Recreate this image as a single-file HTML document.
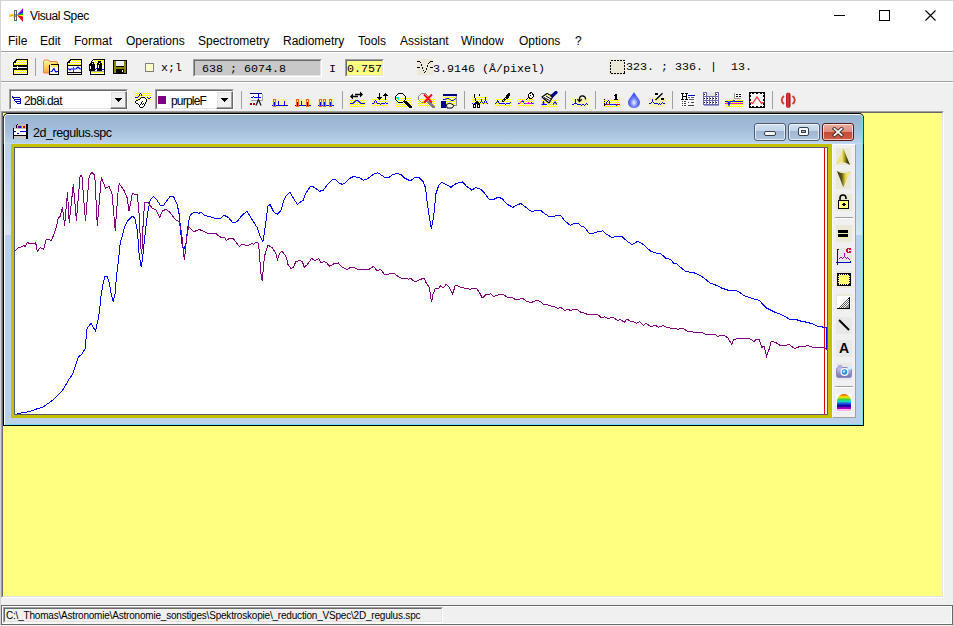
<!DOCTYPE html>
<html><head><meta charset="utf-8">
<style>
*{margin:0;padding:0;box-sizing:border-box}
html,body{width:954px;height:626px;overflow:hidden;background:#f0f0f0;font-family:"Liberation Sans",sans-serif;font-size:12px;color:#000}
.a{position:absolute}
.mono{font-family:"Liberation Mono",monospace}
#win{position:absolute;left:0;top:0;width:954px;height:626px;border:1px solid #d4d4d4;border-bottom:none;background:#f0f0f0}
#title{position:absolute;left:1px;top:1px;width:952px;height:29px;background:#fff}
#menu{position:absolute;left:1px;top:30px;width:952px;height:21px;background:#fff}
.mi{position:absolute;top:4px;font-size:12px;white-space:nowrap}
.hsep{position:absolute;left:1px;width:952px;height:1px;background:#a0a0a0}
.hsepw{position:absolute;left:1px;width:952px;height:1px;background:#fff}
.vsep{position:absolute;width:1px;background:#a0a0a0}
.btn{width:32px;height:18px;border:1px solid #4e5b70;border-radius:3px;background:linear-gradient(#d2e0f0 0%,#c2d4ea 45%,#9fb6d2 46%,#aec4de 100%);box-shadow:inset 0 0 0 1px rgba(255,255,255,0.65)}
.cls{border-color:#5a1818;background:linear-gradient(#eab0a0 0%,#dc8c78 50%,#c44a30 51%,#d06048 100%)}
.g-min{position:absolute;left:9px;top:7px;width:12px;height:5px;background:#fafafa;border:1px solid #3a3e48;border-radius:2px}
.g-max{position:absolute;left:9px;top:3px;width:11px;height:9px;background:#fafafa;border:1px solid #3a3e48;border-radius:2px}
.g-max:after{content:"";position:absolute;left:2px;top:2px;width:3px;height:1px;background:#9ab8d8;border:1px solid #3a3e48}
.combo{position:absolute;height:21px;border-top:1px solid #a0a0a0;border-left:1px solid #a0a0a0;border-right:1px solid #fff;border-bottom:1px solid #fff;background:#fff}
.combo:before{content:"";position:absolute;left:0;top:0;right:0;bottom:0;border-top:1px solid #696969;border-left:1px solid #696969;border-right:1px solid #e3e3e3;border-bottom:1px solid #e3e3e3;pointer-events:none}
.dd{position:absolute;top:1px;width:17px;height:18px;background:#f0f0f0;border-top:1px solid #fff;border-left:1px solid #fff;border-right:1px solid #696969;border-bottom:1px solid #696969;box-shadow:inset -1px -1px 0 #a0a0a0,inset 1px 1px 0 #e3e3e3}
.dd svg{position:absolute;left:4px;top:6px}
.sunk{border-top:1px solid #a0a0a0;border-left:1px solid #a0a0a0;border-right:1px solid #fff;border-bottom:1px solid #fff}
.sunk:before{content:"";position:absolute;left:0;top:0;right:0;bottom:0;border-top:1px solid #696969;border-left:1px solid #696969;border-right:1px solid #e3e3e3;border-bottom:1px solid #e3e3e3}
.ico{position:absolute;width:16px;height:16px}
</style></head><body>
<div id="win"></div>
<div id="title">
  <svg class="a" style="left:8px;top:7px" width="15" height="14" viewBox="0 0 15 14" shape-rendering="crispEdges">
    <rect x="0" y="6" width="5" height="3" fill="#ffe000"/>
    <rect x="1" y="6" width="1" height="1" fill="#fff8a0"/><rect x="3" y="8" width="1" height="1" fill="#fff8a0"/>
    <rect x="2" y="7" width="2" height="1" fill="#f0a000"/>
    <rect x="5" y="2" width="3" height="11" fill="#606060"/>
    <rect x="6" y="3" width="1" height="9" fill="#f0f0f0"/>
    <rect x="6" y="6" width="1" height="3" fill="#00d8e0"/>
    <g shape-rendering="auto">
    <polygon points="8,7 14,0 14,3" fill="#c000e0"/>
    <polygon points="8,7 14,2.5 14,5.5" fill="#1010ff"/>
    <polygon points="8,7 14,5 14,7.5" fill="#00c000"/>
    <polygon points="8,7 14,7 14,9" fill="url(#dith)"/>
    <polygon points="8,7 14,8.5 14,14" fill="#f00000"/>
    </g>
  </svg>
  <div class="a" style="left:29px;top:8px;font-size:12px;letter-spacing:-0.4px">Visual Spec</div>
  <div class="a" style="left:833px;top:14px;width:11px;height:1px;background:#000"></div>
  <div class="a" style="left:878px;top:9px;width:11px;height:11px;border:1px solid #000"></div>
  <svg class="a" style="left:924px;top:9px" width="11" height="11" viewBox="0 0 11 11"><path d="M0.5 0.5L10.5 10.5M10.5 0.5L0.5 10.5" stroke="#000" stroke-width="1.1"/></svg>
</div>
<div id="menu">
  <span class="mi" style="left:7px">File</span>
  <span class="mi" style="left:39px">Edit</span>
  <span class="mi" style="left:73px">Format</span>
  <span class="mi" style="left:125px">Operations</span>
  <span class="mi" style="left:197px">Spectrometry</span>
  <span class="mi" style="left:282px">Radiometry</span>
  <span class="mi" style="left:357px">Tools</span>
  <span class="mi" style="left:399px">Assistant</span>
  <span class="mi" style="left:460px">Window</span>
  <span class="mi" style="left:518px">Options</span>
  <span class="mi" style="left:574px">?</span>
</div>
<div class="hsep" style="top:51px"></div>
<div class="hsepw" style="top:52px"></div>

<svg class="a" style="left:13px;top:59px" width="15" height="16" viewBox="0 0 15 16" shape-rendering="crispEdges">
  <path d="M3 0H15V16H0V3Z" fill="#000"/>
  <path d="M4 1H14V6H1V4H3V2H4Z" fill="url(#dith)"/>
  <rect x="1" y="11" width="13" height="4" fill="url(#dith)"/>
  <rect x="0" y="8" width="14" height="1" fill="#fff"/><rect x="4" y="7" width="1" height="3" fill="#fff"/>
</svg>
<div class="vsep" style="left:35px;top:58px;height:18px"></div>
<svg class="a" style="left:43px;top:59px" width="16" height="16" viewBox="0 0 16 16">
  <defs><linearGradient id="fold" x1="0" y1="0" x2="0.3" y2="1"><stop offset="0" stop-color="#fff4c0"/><stop offset="0.5" stop-color="#f8d860"/><stop offset="1" stop-color="#f0a040"/></linearGradient></defs>
  <path d="M0.5 2.5Q0.5 1 2 1H5L7 2.5H13Q14.5 2.5 14.5 4V14H0.5Z" fill="url(#fold)" stroke="#f08040" stroke-width="1"/>
  <g shape-rendering="crispEdges">
  <rect x="6" y="5" width="10" height="11" fill="#000"/><rect x="6" y="5" width="2" height="1" fill="#f0c060"/>
  <rect x="7" y="6" width="8" height="9" fill="#fffce0"/>
  <rect x="8" y="6" width="7" height="2" fill="#ffe860"/>
  </g>
  <path d="M7.5 12.5H9L10 10.5L11 9.5L12 12L13 13L14 12.5H15" fill="none" stroke="#0000ff" stroke-width="1.2"/>
</svg>
<svg class="a" style="left:67px;top:59px" width="15" height="16" viewBox="0 0 15 16" shape-rendering="crispEdges">
  <path d="M3 0H15V16H0V3Z" fill="#000"/>
  <path d="M4 1H14V6H1V4H3V2H4Z" fill="url(#dith)"/>
  <rect x="1" y="7" width="13" height="6" fill="#fff"/>
  <rect x="1" y="14" width="13" height="1" fill="url(#dith)"/>
  <path d="M1 10H2L3 11L4 10H9L10 9L11 8L12 9L13 10H14" fill="none" stroke="#0000ff" stroke-width="1.2" shape-rendering="auto"/>
  <rect x="6" y="8" width="1" height="5" fill="#ff0000"/>
</svg>
<svg class="a" style="left:89px;top:59px" width="16" height="16" viewBox="0 0 16 16" shape-rendering="crispEdges">
  <rect x="1" y="4" width="15" height="12" fill="#000"/><rect x="4" y="0" width="12" height="4" fill="#000"/><rect x="3" y="1" width="1" height="3" fill="#000"/><rect x="2" y="2" width="1" height="2" fill="#000"/>
  <rect x="4" y="1" width="11" height="14" fill="#fff"/><rect x="2" y="4" width="2" height="11" fill="#fff"/><rect x="3" y="2" width="1" height="2" fill="#fff"/>
  <rect x="5" y="1" width="10" height="5" fill="url(#dith)"/>
  <rect x="2" y="13" width="13" height="1" fill="url(#dith)"/>
  <rect x="2" y="12" width="13" height="1" fill="#a0a0a0"/>
  <rect x="5" y="10" width="2" height="1" fill="#0000ff"/><rect x="7" y="9" width="1" height="1" fill="#0000ff"/><rect x="13" y="10" width="2" height="1" fill="#0000ff"/>
  <rect x="0" y="5" width="6" height="7" fill="#000"/><rect x="2" y="3" width="3" height="2" fill="#000"/>
  <rect x="8" y="4" width="5" height="8" fill="#000"/><rect x="9" y="2" width="3" height="2" fill="#000"/>
  <rect x="1" y="7" width="1" height="3" fill="#fff"/><rect x="3" y="4" width="1" height="1" fill="#fff"/>
  <rect x="9" y="6" width="1" height="3" fill="#fff"/><rect x="10" y="4" width="1" height="1" fill="#fff"/>
</svg>
<svg class="a" style="left:113px;top:60px" width="14" height="14" viewBox="0 0 14 14" shape-rendering="crispEdges">
  <rect x="0" y="0" width="14" height="14" fill="#000"/>
  <rect x="1" y="1" width="12" height="12" fill="#8a8400"/>
  <rect x="3" y="1" width="8" height="6" fill="#000"/>
  <rect x="3" y="1" width="8" height="5" fill="#f0f0f0"/>
  <rect x="3" y="9" width="8" height="4" fill="#000"/>
  <rect x="9" y="10" width="1" height="2" fill="#fff"/>
</svg>
<div class="a" style="left:145px;top:63px;width:9px;height:9px;border:1px solid #808080;background:#ffffc8"></div>
<div class="a mono" style="left:161px;top:61px;font-size:11.67px;line-height:14px">x;l</div>
<div class="a sunk" style="left:193px;top:59px;width:129px;height:18px;background:#c8c8c8"></div>
<div class="a mono" style="left:202px;top:62px;font-size:11.67px;line-height:14px;white-space:pre">638 ; 6074.8</div>
<div class="a mono" style="left:329px;top:62px;font-size:11.67px;line-height:14px">I</div>
<div class="a sunk" style="left:345px;top:59px;width:39px;height:18px;background:#ffff80"></div>
<div class="a mono" style="left:347px;top:62px;font-size:11.67px;line-height:14px">0.757</div>
<svg class="a" style="left:417px;top:59px" width="16" height="16" viewBox="0 0 16 16" shape-rendering="crispEdges"><rect width="16" height="16" fill="#ebe8d8"/><g fill="#000"><rect x="0" y="2" width="1" height="1"/><rect x="1" y="2" width="1" height="1"/><rect x="2" y="2" width="1" height="1"/><rect x="3" y="3" width="1" height="1"/><rect x="4" y="5" width="1" height="1"/><rect x="4" y="6" width="1" height="1"/><rect x="5" y="8" width="1" height="1"/><rect x="5" y="9" width="1" height="1"/><rect x="6" y="11" width="1" height="1"/><rect x="7" y="13" width="1" height="1"/><rect x="8" y="12" width="1" height="1"/><rect x="9" y="10" width="1" height="1"/><rect x="9" y="9" width="1" height="1"/><rect x="10" y="7" width="1" height="1"/><rect x="10" y="6" width="1" height="1"/><rect x="11" y="4" width="1" height="1"/><rect x="12" y="3" width="1" height="1"/><rect x="13" y="2" width="1" height="1"/><rect x="14" y="2" width="1" height="1"/><rect x="15" y="2" width="1" height="1"/><rect x="0" y="8" width="1" height="1"/><rect x="1" y="8" width="1" height="1"/><rect x="2" y="8" width="1" height="1"/><rect x="13" y="8" width="1" height="1"/><rect x="14" y="8" width="1" height="1"/><rect x="15" y="8" width="1" height="1"/></g></svg>
<div class="a mono" style="left:433px;top:62px;font-size:11.67px;line-height:14px;white-space:pre">3.9146 (&#197;/pixel)</div>
<svg class="a" style="left:609px;top:59px" width="16" height="16" viewBox="0 0 16 16" shape-rendering="crispEdges">
  <rect x="0" y="0" width="16" height="16" fill="#ebe8d8"/>
  <rect x="1.5" y="1.5" width="14" height="13" fill="none" stroke="#000" stroke-width="1" stroke-dasharray="2 1"/>
</svg>
<div class="a mono" style="left:626px;top:60px;font-size:11.67px;line-height:14px;white-space:pre">323. ; 336. |  13.</div>

<div class="hsep" style="top:81px"></div>
<div class="hsepw" style="top:82px"></div>

<svg width="0" height="0" style="position:absolute">
  <defs>
    <pattern id="dith" width="2" height="2" patternUnits="userSpaceOnUse">
      <rect width="2" height="2" fill="#ffff00"/><rect x="1" y="0" width="1" height="1" fill="#fff"/><rect x="0" y="1" width="1" height="1" fill="#fff"/>
    </pattern>
  </defs>
</svg>
<!-- combo 1 -->
<div class="a combo" style="left:9px;top:89px;width:119px">
  <svg class="a" style="left:2px;top:6px" width="9" height="8" viewBox="0 0 9 8" shape-rendering="crispEdges"><g fill="#0000c0"><rect x="0" y="0" width="1" height="1"/><rect x="0" y="1" width="1" height="1"/><rect x="1" y="1" width="1" height="1"/><rect x="2" y="1" width="1" height="1"/><rect x="3" y="1" width="1" height="1"/><rect x="4" y="1" width="1" height="1"/><rect x="5" y="1" width="1" height="1"/><rect x="6" y="1" width="1" height="1"/><rect x="7" y="1" width="1" height="1"/><rect x="1" y="2" width="1" height="1"/><rect x="8" y="2" width="1" height="1"/><rect x="2" y="3" width="1" height="1"/><rect x="3" y="3" width="1" height="1"/><rect x="4" y="3" width="1" height="1"/><rect x="5" y="3" width="1" height="1"/><rect x="6" y="3" width="1" height="1"/><rect x="7" y="3" width="1" height="1"/><rect x="8" y="3" width="1" height="1"/><rect x="2" y="4" width="1" height="1"/><rect x="8" y="4" width="1" height="1"/><rect x="3" y="5" width="1" height="1"/><rect x="4" y="5" width="1" height="1"/><rect x="5" y="5" width="1" height="1"/><rect x="6" y="5" width="1" height="1"/><rect x="7" y="5" width="1" height="1"/><rect x="8" y="5" width="1" height="1"/><rect x="4" y="6" width="1" height="1"/><rect x="8" y="6" width="1" height="1"/><rect x="5" y="7" width="1" height="1"/><rect x="6" y="7" width="1" height="1"/><rect x="7" y="7" width="1" height="1"/><rect x="8" y="7" width="1" height="1"/></g></svg>
  <div class="a" style="left:14px;top:4px;font-size:12px;letter-spacing:-0.6px">2b8i.dat</div>
  <div class="a dd" style="left:100px"><svg width="7" height="4" viewBox="0 0 7 4" shape-rendering="crispEdges"><path d="M0 0H7V1H6V2H5V3H4V4H3V3H2V2H1V1H0Z" fill="#000"/></svg></div>
</div>
<svg class="a" style="left:135px;top:92px" width="16" height="16" viewBox="0 0 16 16" shape-rendering="crispEdges">
  <rect x="0" y="0" width="16" height="8" fill="url(#dith)"/><rect x="11" y="8" width="5" height="1" fill="url(#dith)"/>
  <g fill="#0000ff"><rect x="0" y="5" width="1" height="1"/><rect x="1" y="5" width="1" height="1"/><rect x="2" y="5" width="1" height="1"/><rect x="3" y="4" width="1" height="1"/><rect x="4" y="3" width="1" height="1"/><rect x="4" y="2" width="1" height="1"/><rect x="5" y="1" width="1" height="1"/><rect x="6" y="2" width="1" height="1"/><rect x="6" y="3" width="1" height="1"/><rect x="12" y="5" width="1" height="1"/><rect x="13" y="6" width="1" height="1"/><rect x="14" y="6" width="1" height="1"/><rect x="15" y="5" width="1" height="1"/></g>
  <g fill="#fff"><rect x="6" y="6" width="1" height="1"/><rect x="7" y="6" width="1" height="1"/><rect x="8" y="6" width="1" height="1"/><rect x="9" y="6" width="1" height="1"/><rect x="5" y="7" width="1" height="1"/><rect x="6" y="7" width="1" height="1"/><rect x="7" y="7" width="1" height="1"/><rect x="8" y="7" width="1" height="1"/><rect x="9" y="7" width="1" height="1"/><rect x="10" y="7" width="1" height="1"/><rect x="3" y="8" width="1" height="1"/><rect x="4" y="8" width="1" height="1"/><rect x="5" y="8" width="1" height="1"/><rect x="6" y="8" width="1" height="1"/><rect x="7" y="8" width="1" height="1"/><rect x="8" y="8" width="1" height="1"/><rect x="9" y="8" width="1" height="1"/><rect x="10" y="8" width="1" height="1"/><rect x="1" y="9" width="1" height="1"/><rect x="2" y="9" width="1" height="1"/><rect x="3" y="9" width="1" height="1"/><rect x="4" y="9" width="1" height="1"/><rect x="5" y="9" width="1" height="1"/><rect x="6" y="9" width="1" height="1"/><rect x="7" y="9" width="1" height="1"/><rect x="8" y="9" width="1" height="1"/><rect x="9" y="9" width="1" height="1"/><rect x="10" y="9" width="1" height="1"/><rect x="1" y="10" width="1" height="1"/><rect x="2" y="10" width="1" height="1"/><rect x="3" y="10" width="1" height="1"/><rect x="4" y="10" width="1" height="1"/><rect x="5" y="10" width="1" height="1"/><rect x="6" y="10" width="1" height="1"/><rect x="7" y="10" width="1" height="1"/><rect x="8" y="10" width="1" height="1"/><rect x="9" y="10" width="1" height="1"/><rect x="3" y="11" width="1" height="1"/><rect x="4" y="11" width="1" height="1"/><rect x="5" y="11" width="1" height="1"/><rect x="6" y="11" width="1" height="1"/><rect x="7" y="11" width="1" height="1"/><rect x="8" y="11" width="1" height="1"/><rect x="9" y="11" width="1" height="1"/><rect x="4" y="12" width="1" height="1"/><rect x="5" y="12" width="1" height="1"/><rect x="6" y="12" width="1" height="1"/><rect x="7" y="12" width="1" height="1"/><rect x="8" y="12" width="1" height="1"/><rect x="5" y="13" width="1" height="1"/><rect x="6" y="13" width="1" height="1"/><rect x="7" y="13" width="1" height="1"/><rect x="8" y="13" width="1" height="1"/><rect x="5" y="14" width="1" height="1"/><rect x="6" y="14" width="1" height="1"/><rect x="7" y="14" width="1" height="1"/></g>
  <g fill="#000"><rect x="6" y="5" width="1" height="1"/><rect x="7" y="5" width="1" height="1"/><rect x="8" y="5" width="1" height="1"/><rect x="9" y="5" width="1" height="1"/><rect x="5" y="6" width="1" height="1"/><rect x="0" y="9" width="1" height="1"/><rect x="1" y="8" width="1" height="1"/><rect x="2" y="8" width="1" height="1"/><rect x="3" y="7" width="1" height="1"/><rect x="4" y="7" width="1" height="1"/><rect x="10" y="6" width="1" height="1"/><rect x="11" y="7" width="1" height="1"/><rect x="11" y="8" width="1" height="1"/><rect x="11" y="9" width="1" height="1"/><rect x="10" y="10" width="1" height="1"/><rect x="10" y="11" width="1" height="1"/><rect x="9" y="12" width="1" height="1"/><rect x="9" y="13" width="1" height="1"/><rect x="8" y="14" width="1" height="1"/><rect x="5" y="15" width="1" height="1"/><rect x="6" y="15" width="1" height="1"/><rect x="7" y="15" width="1" height="1"/><rect x="0" y="10" width="1" height="1"/><rect x="1" y="11" width="1" height="1"/><rect x="2" y="11" width="1" height="1"/><rect x="3" y="12" width="1" height="1"/><rect x="4" y="13" width="1" height="1"/><rect x="4" y="14" width="1" height="1"/><rect x="7" y="9" width="1" height="1"/><rect x="6" y="10" width="1" height="1"/><rect x="6" y="11" width="1" height="1"/><rect x="5" y="12" width="1" height="1"/><rect x="8" y="11" width="1" height="1"/><rect x="7" y="12" width="1" height="1"/></g>
</svg>
<!-- combo 2 -->
<div class="a combo" style="left:155px;top:89px;width:79px">
  <div class="a" style="left:2px;top:6px;width:8px;height:8px;background:#800080"></div>
  <div class="a" style="left:15px;top:4px;font-size:12px;letter-spacing:-0.8px">purpleF</div>
  <div class="a dd" style="left:60px"><svg width="7" height="4" viewBox="0 0 7 4" shape-rendering="crispEdges"><path d="M0 0H7V1H6V2H5V3H4V4H3V3H2V2H1V1H0Z" fill="#000"/></svg></div>
</div>
<div class="vsep" style="left:241px;top:91px;height:18px"></div>
<svg class="a" style="left:250px;top:93px" width="14" height="14" viewBox="0 0 14 14" shape-rendering="crispEdges">
  <rect x="1" y="1" width="12" height="7" fill="#a8a8a8"/>
  <rect x="0" y="0" width="12" height="7" fill="#fff"/>
  <rect x="0" y="0" width="12" height="1" fill="#000080"/>
  <rect x="1" y="4" width="2" height="1" fill="#00f"/><rect x="3" y="3" width="1" height="1" fill="#00f"/><rect x="4" y="4" width="4" height="1" fill="#00f"/><rect x="8" y="1" width="1" height="4" fill="#00f"/><rect x="9" y="4" width="2" height="1" fill="#00f"/>
  <rect x="0" y="10" width="2" height="2" fill="#a00000"/><rect x="3" y="10" width="2" height="2" fill="#a00000"/>
  <path d="M6 12.5L8.5 6.5L11 12.5" fill="none" stroke="#202020" stroke-width="1.3" shape-rendering="auto"/>
</svg>
<svg class="a" style="left:272px;top:99px" width="16" height="8" viewBox="0 0 16 8" shape-rendering="crispEdges"><rect width="16" height="8" fill="#f4f0a8"/><rect x="0" y="6" width="16" height="1" fill="#0000ff"/><rect x="1.5" y="0.5" width="2" height="7" fill="none" stroke="#f06030" stroke-width="1"/><rect x="2" y="3" width="1" height="3" fill="#0000ff"/><rect x="6" y="2" width="1" height="5" fill="#0000ff"/><rect x="12" y="2" width="1" height="5" fill="#0000ff"/></svg>
<svg class="a" style="left:295px;top:99px" width="16" height="8" viewBox="0 0 16 8" shape-rendering="crispEdges"><rect width="16" height="8" fill="#f4f0a8"/><rect x="0" y="6" width="16" height="1" fill="#0000ff"/><rect x="1.5" y="0.5" width="2" height="7" fill="none" stroke="#f06030" stroke-width="1"/><rect x="2" y="3" width="1" height="3" fill="#0000ff"/><rect x="11.5" y="0.5" width="2" height="7" fill="none" stroke="#f06030" stroke-width="1"/><rect x="12" y="3" width="1" height="3" fill="#0000ff"/><rect x="6" y="2" width="1" height="5" fill="#0000ff"/></svg>
<svg class="a" style="left:318px;top:99px" width="16" height="8" viewBox="0 0 16 8" shape-rendering="crispEdges"><rect width="16" height="8" fill="#f4f0a8"/><rect x="0" y="6" width="16" height="1" fill="#0000ff"/><rect x="1.5" y="0.5" width="2" height="7" fill="none" stroke="#f06030" stroke-width="1"/><rect x="2" y="3" width="1" height="3" fill="#0000ff"/><rect x="5.5" y="0.5" width="2" height="7" fill="none" stroke="#f06030" stroke-width="1"/><rect x="6" y="3" width="1" height="3" fill="#0000ff"/><rect x="11.5" y="0.5" width="2" height="7" fill="none" stroke="#f06030" stroke-width="1"/><rect x="12" y="3" width="1" height="3" fill="#0000ff"/></svg>

<div class="vsep" style="left:342px;top:91px;height:18px"></div>
<svg class="a" style="left:349px;top:91px" width="16" height="16" viewBox="0 0 16 16">
  <rect x="0" y="8" width="16" height="8" fill="url(#dith)" shape-rendering="crispEdges"/>
  <path d="M1 12.5H4L5 11.5L7 9.5H9L11 11.5L12 12.5H16" fill="none" stroke="#0000ff" stroke-width="1.2"/>
  <path d="M2 5.5H9M6 3.5H13" stroke="#000" stroke-width="1.6"/>
  <path d="M1 5.5L4 2.5V8.5Z M14 3.5L11 0.5V6.5Z" fill="#000"/>
</svg>
<svg class="a" style="left:372px;top:91px" width="16" height="16" viewBox="0 0 16 16" shape-rendering="crispEdges">
  <rect x="0" y="8" width="16" height="8" fill="url(#dith)"/>
  <g fill="#0000ff"><rect x="0" y="12" width="1" height="1"/><rect x="1" y="12" width="1" height="1"/><rect x="2" y="11" width="1" height="1"/><rect x="2" y="10" width="1" height="1"/><rect x="3" y="9" width="1" height="1"/><rect x="4" y="10" width="1" height="1"/><rect x="4" y="11" width="1" height="1"/><rect x="5" y="12" width="1" height="1"/><rect x="6" y="12" width="1" height="1"/><rect x="7" y="12" width="1" height="1"/><rect x="8" y="13" width="1" height="1"/><rect x="9" y="12" width="1" height="1"/><rect x="10" y="12" width="1" height="1"/><rect x="11" y="12" width="1" height="1"/><rect x="12" y="12" width="1" height="1"/><rect x="13" y="11" width="1" height="1"/><rect x="14" y="12" width="1" height="1"/><rect x="15" y="12" width="1" height="1"/></g>
  <g fill="#000"><rect x="7" y="2" width="1" height="1"/><rect x="7" y="3" width="1" height="1"/><rect x="7" y="4" width="1" height="1"/><rect x="7" y="5" width="1" height="1"/><rect x="5" y="6" width="1" height="1"/><rect x="6" y="6" width="1" height="1"/><rect x="7" y="6" width="1" height="1"/><rect x="8" y="6" width="1" height="1"/><rect x="9" y="6" width="1" height="1"/><rect x="6" y="7" width="1" height="1"/><rect x="7" y="7" width="1" height="1"/><rect x="8" y="7" width="1" height="1"/><rect x="7" y="8" width="1" height="1"/><rect x="13" y="2" width="1" height="1"/><rect x="12" y="3" width="1" height="1"/><rect x="13" y="3" width="1" height="1"/><rect x="14" y="3" width="1" height="1"/><rect x="11" y="4" width="1" height="1"/><rect x="12" y="4" width="1" height="1"/><rect x="13" y="4" width="1" height="1"/><rect x="14" y="4" width="1" height="1"/><rect x="15" y="4" width="1" height="1"/><rect x="13" y="5" width="1" height="1"/><rect x="13" y="6" width="1" height="1"/><rect x="13" y="7" width="1" height="1"/><rect x="13" y="8" width="1" height="1"/></g>
</svg>
<svg class="a" style="left:395px;top:93px" width="17" height="15" viewBox="0 0 17 15" shape-rendering="crispEdges">
  <rect x="0" y="5" width="17" height="9" fill="url(#dith)"/>
  <rect x="1" y="1" width="9" height="4" fill="#f4f4f8"/><rect x="3" y="0" width="5" height="1" fill="#f4f4f8"/>
  <g fill="#00e8ff"><rect x="1" y="4" width="2" height="1"/><rect x="2" y="5" width="2" height="1"/><rect x="3" y="6" width="1" height="1"/><rect x="3" y="4" width="1" height="1"/></g>
  <g fill="#000"><rect x="3" y="0" width="1" height="1"/><rect x="4" y="0" width="1" height="1"/><rect x="5" y="0" width="1" height="1"/><rect x="6" y="0" width="1" height="1"/><rect x="7" y="0" width="1" height="1"/><rect x="2" y="1" width="1" height="1"/><rect x="8" y="1" width="1" height="1"/><rect x="1" y="2" width="1" height="1"/><rect x="9" y="2" width="1" height="1"/><rect x="0" y="3" width="1" height="1"/><rect x="0" y="4" width="1" height="1"/><rect x="0" y="5" width="1" height="1"/><rect x="0" y="6" width="1" height="1"/><rect x="10" y="3" width="1" height="1"/><rect x="10" y="4" width="1" height="1"/><rect x="10" y="5" width="1" height="1"/><rect x="10" y="6" width="1" height="1"/><rect x="1" y="7" width="1" height="1"/><rect x="9" y="7" width="1" height="1"/><rect x="2" y="8" width="1" height="1"/><rect x="8" y="8" width="1" height="1"/><rect x="3" y="9" width="1" height="1"/><rect x="4" y="9" width="1" height="1"/><rect x="5" y="9" width="1" height="1"/><rect x="6" y="9" width="1" height="1"/><rect x="7" y="9" width="1" height="1"/></g>
  <g fill="#000"><rect x="9" y="8" width="3" height="2"/><rect x="10" y="9" width="3" height="2"/><rect x="11" y="10" width="3" height="2"/><rect x="12" y="11" width="3" height="2"/><rect x="13" y="12" width="3" height="2"/><rect x="14" y="13" width="3" height="2"/></g>
</svg>
<svg class="a" style="left:418px;top:93px" width="17" height="15" viewBox="0 0 17 15" shape-rendering="crispEdges">
  <rect x="0" y="5" width="17" height="9" fill="url(#dith)"/>
  <rect x="1" y="1" width="9" height="4" fill="#f0f0f0"/><rect x="3" y="0" width="5" height="1" fill="#f0f0f0"/>
  
  <g fill="#909090"><rect x="3" y="0" width="1" height="1"/><rect x="4" y="0" width="1" height="1"/><rect x="5" y="0" width="1" height="1"/><rect x="6" y="0" width="1" height="1"/><rect x="7" y="0" width="1" height="1"/><rect x="2" y="1" width="1" height="1"/><rect x="8" y="1" width="1" height="1"/><rect x="1" y="2" width="1" height="1"/><rect x="9" y="2" width="1" height="1"/><rect x="0" y="3" width="1" height="1"/><rect x="0" y="4" width="1" height="1"/><rect x="0" y="5" width="1" height="1"/><rect x="0" y="6" width="1" height="1"/><rect x="10" y="3" width="1" height="1"/><rect x="10" y="4" width="1" height="1"/><rect x="10" y="5" width="1" height="1"/><rect x="10" y="6" width="1" height="1"/><rect x="1" y="7" width="1" height="1"/><rect x="9" y="7" width="1" height="1"/><rect x="2" y="8" width="1" height="1"/><rect x="8" y="8" width="1" height="1"/><rect x="3" y="9" width="1" height="1"/><rect x="4" y="9" width="1" height="1"/><rect x="5" y="9" width="1" height="1"/><rect x="6" y="9" width="1" height="1"/><rect x="7" y="9" width="1" height="1"/></g>
  <g fill="#808080"><rect x="9" y="8" width="3" height="2"/><rect x="10" y="9" width="3" height="2"/><rect x="11" y="10" width="3" height="2"/><rect x="12" y="11" width="3" height="2"/><rect x="13" y="12" width="3" height="2"/><rect x="14" y="13" width="3" height="2"/></g>
<path d="M6 1.5L14 9.5M14 1.5L6 9.5" stroke="#ff0000" stroke-width="1.8" shape-rendering="auto"/></svg>
<svg class="a" style="left:441px;top:94px" width="16" height="15" viewBox="0 0 16 15" shape-rendering="crispEdges">
  <rect x="2" y="0" width="14" height="12" fill="#909090"/>
  <rect x="2" y="1" width="13" height="10" fill="url(#dith)"/>
  <rect x="2" y="0" width="14" height="2" fill="#000080"/>
  <path d="M2 5.5H4L6 4.5H8L10 6.5H12L15 4.5" fill="none" stroke="#0000ff" stroke-width="1" shape-rendering="auto"/>
  <rect x="0" y="7" width="5" height="7" fill="#000080"/>
  <path d="M5.5 10.5L9 9L13 11.5L11 14H6Z" fill="#fff" stroke="#000" stroke-width="1" shape-rendering="auto"/>
</svg>
<div class="vsep" style="left:464px;top:91px;height:18px"></div>
<svg class="a" style="left:472px;top:93px" width="16" height="15" viewBox="0 0 16 15" shape-rendering="crispEdges">
  <rect x="0" y="4" width="16" height="8" fill="url(#dith)"/>
  <g fill="#0000ff"><rect x="0" y="10" width="1" height="1"/><rect x="2" y="10" width="2" height="1"/><rect x="6" y="10" width="2" height="1"/><rect x="8" y="9" width="1" height="1"/><rect x="9" y="6" width="1" height="3"/><rect x="10" y="9" width="1" height="1"/><rect x="11" y="10" width="1" height="1"/><rect x="12" y="8" width="1" height="2"/><rect x="13" y="4" width="1" height="4"/><rect x="14" y="8" width="1" height="2"/><rect x="15" y="10" width="1" height="1"/></g>
  <g fill="#000"><rect x="2" y="1" width="1" height="4"/><rect x="3" y="5" width="1" height="3"/><rect x="4" y="8" width="2" height="2"/><rect x="3" y="9" width="1" height="1"/><rect x="7" y="1" width="1" height="2"/><rect x="6" y="9" width="1" height="2"/><rect x="3" y="10" width="4" height="1"/>
  <rect x="1" y="11" width="3" height="1"/><rect x="1" y="14" width="3" height="1"/><rect x="1" y="12" width="1" height="2"/><rect x="3" y="12" width="1" height="2"/>
  <rect x="5" y="11" width="3" height="1"/><rect x="5" y="14" width="3" height="1"/><rect x="5" y="12" width="1" height="2"/><rect x="7" y="12" width="1" height="2"/></g>
  <rect x="2" y="12" width="1" height="2" fill="#fff"/><rect x="6" y="12" width="1" height="2" fill="#fff"/>
</svg>
<svg class="a" style="left:495px;top:92px" width="16" height="15" viewBox="0 0 16 15" shape-rendering="crispEdges">
  <rect x="0" y="7" width="16" height="8" fill="url(#dith)"/>
  <g fill="#0000ff"><rect x="0" y="11" width="1" height="1"/><rect x="1" y="10" width="1" height="1"/><rect x="2" y="8" width="1" height="2"/><rect x="3" y="9" width="1" height="2"/><rect x="4" y="11" width="6" height="1"/><rect x="10" y="12" width="1" height="1"/><rect x="11" y="11" width="4" height="1"/><rect x="15" y="10" width="1" height="1"/></g>
  <g fill="#000"><rect x="7" y="8" width="2" height="2"/><rect x="8" y="7" width="2" height="2"/><rect x="9" y="6" width="2" height="2"/><rect x="10" y="5" width="3" height="2"/><rect x="11" y="3" width="3" height="3"/><rect x="12" y="2" width="3" height="2"/><rect x="13" y="1" width="2" height="1"/></g>
  <rect x="8" y="8" width="1" height="1" fill="#fff"/><rect x="10" y="6" width="1" height="1" fill="#fff"/>
</svg>
<svg class="a" style="left:518px;top:91px" width="16" height="16" viewBox="0 0 16 16" shape-rendering="crispEdges">
  <rect x="0" y="8" width="16" height="8" fill="url(#dith)"/>
  <g fill="#ff00ff"><rect x="1" y="12" width="1" height="1"/><rect x="2" y="11" width="1" height="1"/><rect x="3" y="10" width="1" height="1"/><rect x="4" y="9" width="1" height="1"/><rect x="5" y="11" width="1" height="1"/><rect x="6" y="12" width="2" height="1"/><rect x="8" y="12" width="3" height="1"/><rect x="10" y="11" width="1" height="1"/><rect x="11" y="12" width="3" height="1"/><rect x="15" y="12" width="1" height="1"/></g>
  <g fill="#0000ff"><rect x="0" y="12" width="1" height="1"/><rect x="4" y="10" width="1" height="1"/><rect x="5" y="10" width="1" height="1"/><rect x="14" y="12" width="1" height="1"/><rect x="13" y="11" width="1" height="1"/><rect x="6" y="12" width="1" height="1"/></g>
  <g fill="#000"><rect x="8" y="8" width="1" height="1"/><rect x="9" y="7" width="1" height="1"/>
  <rect x="10" y="3" width="1" height="3"/><rect x="11" y="2" width="2" height="1"/><rect x="12" y="1" width="2" height="1"/><rect x="14" y="2" width="1" height="2"/><rect x="15" y="3" width="1" height="3"/><rect x="14" y="6" width="1" height="1"/><rect x="12" y="7" width="2" height="1"/><rect x="11" y="6" width="1" height="2"/><rect x="10" y="6" width="1" height="1"/></g>
  <rect x="11" y="3" width="3" height="3" fill="#fff"/><rect x="14" y="4" width="1" height="2" fill="#fff"/><rect x="12" y="6" width="2" height="1" fill="#fff"/><rect x="12" y="4" width="1" height="1" fill="#000"/>
</svg>
<svg class="a" style="left:541px;top:91px" width="17" height="18" viewBox="0 0 17 18">
  <rect x="0" y="8" width="16" height="8" fill="url(#dith)" shape-rendering="crispEdges"/>
  <g fill="#ffff00" shape-rendering="crispEdges"><rect x="0" y="16" width="1" height="2"/><rect x="2" y="16" width="1" height="2"/><rect x="4" y="16" width="1" height="2"/></g>
  <path d="M0.5 13.5H2L2.5 10L3 13.5H6M12 13.5L14 11L16 13.5" fill="none" stroke="#0000ff" stroke-width="1.1"/>
  <path d="M1 6L6 2.5L12 5.5L8 12Z" fill="#fff" stroke="#000" stroke-width="1.2" stroke-linejoin="round"/>
  <path d="M3 6.5L8.5 9.5M5 5L10 8" stroke="#000" stroke-width="1"/>
  <path d="M6 3.5L11 6.5" stroke="#f0f000" stroke-width="1"/>
  <path d="M11 5L15 1.5" stroke="#000080" stroke-width="3.2" stroke-linecap="round"/>
</svg>
<div class="vsep" style="left:565px;top:91px;height:18px"></div>
<svg class="a" style="left:572px;top:93px" width="17" height="14" viewBox="0 0 17 14">
  <rect x="0" y="5" width="17" height="9" fill="#f6f2b0" shape-rendering="crispEdges"/>
  <g fill="#0000ff" shape-rendering="crispEdges"><rect x="0" y="11" width="2" height="1"/><rect x="2" y="10" width="1" height="1"/><rect x="3" y="6" width="1" height="5"/><rect x="4" y="10" width="1" height="1"/><rect x="5" y="11" width="4" height="1"/><rect x="9" y="12" width="1" height="1"/><rect x="10" y="11" width="2" height="1"/><rect x="12" y="12" width="1" height="1"/><rect x="13" y="11" width="1" height="1"/><rect x="14" y="10" width="1" height="1"/><rect x="15" y="11" width="1" height="1"/></g>
  <path d="M13.5 6.5A3 3 0 0 0 7.5 5.5L7.5 8.5" fill="none" stroke="#000" stroke-width="1.3"/>
  <path d="M5.5 6.3L7.5 8.6L9.8 6.3" fill="none" stroke="#000" stroke-width="1.3"/>
</svg>
<div class="vsep" style="left:595px;top:91px;height:18px"></div>
<svg class="a" style="left:603px;top:93px" width="17" height="14" viewBox="0 0 17 14" shape-rendering="crispEdges">
  <rect x="0" y="6" width="17" height="8" fill="url(#dith)"/>
  <g fill="#000"><rect x="1" y="6" width="1" height="1"/><rect x="1" y="8" width="1" height="1"/><rect x="1" y="10" width="1" height="3"/>
  <rect x="12" y="1" width="2" height="6"/><rect x="11" y="2" width="1" height="1"/><rect x="11" y="6" width="4" height="1"/></g>
  <rect x="2" y="11" width="15" height="1" fill="#ff0000"/>
  <g fill="#0000ff"><rect x="2" y="11" width="1" height="1"/><rect x="3" y="9" width="1" height="2"/><rect x="4" y="8" width="1" height="1"/><rect x="5" y="7" width="1" height="1"/><rect x="6" y="8" width="1" height="3"/><rect x="7" y="11" width="1" height="1"/><rect x="9" y="11" width="1" height="1"/><rect x="11" y="11" width="1" height="1"/><rect x="13" y="12" width="1" height="1"/><rect x="12" y="11" width="1" height="1"/><rect x="14" y="11" width="1" height="1"/></g>
</svg>
<svg class="a" style="left:627px;top:91px" width="14" height="17" viewBox="0 0 14 17">
  <defs><radialGradient id="dropg" cx="0.5" cy="0.66" r="0.5"><stop offset="0" stop-color="#f4f6ff"/><stop offset="0.55" stop-color="#7080ff"/><stop offset="1" stop-color="#4050f0"/></radialGradient></defs>
  <path d="M7 1C9 5 13 8 13 11.5A6 5.5 0 0 1 1 11.5C1 8 5 5 7 1Z" fill="url(#dropg)"/>
</svg>
<svg class="a" style="left:649px;top:92px" width="17" height="15" viewBox="0 0 17 15">
  <rect x="0" y="6" width="17" height="9" fill="#f6f2b0" shape-rendering="crispEdges"/>
  <g fill="#0000ff" shape-rendering="crispEdges"><rect x="0" y="11" width="2" height="1"/><rect x="2" y="10" width="1" height="1"/><rect x="3" y="7" width="1" height="3"/><rect x="4" y="10" width="1" height="1"/><rect x="5" y="11" width="4" height="1"/><rect x="9" y="12" width="1" height="1"/><rect x="10" y="11" width="1" height="1"/><rect x="11" y="12" width="1" height="1"/><rect x="12" y="11" width="1" height="1"/><rect x="13" y="10" width="1" height="1"/><rect x="14" y="11" width="2" height="1"/></g>
  <g fill="#000" shape-rendering="crispEdges"><rect x="6" y="1" width="3" height="2"/><rect x="12" y="6" width="3" height="2"/></g>
  <path d="M6.5 8L13.5 1.2" stroke="#000" stroke-width="1.3"/>
</svg>
<div class="vsep" style="left:672px;top:91px;height:18px"></div>
<svg class="a" style="left:680px;top:92px" width="16" height="15" viewBox="0 0 16 15" shape-rendering="crispEdges">
  <rect x="0" y="1" width="16" height="14" fill="#fafafa"/>
  <path transform="translate(1,0)" d="M0 1H3V2H2V4H5V2H4V1H7V2H6V7H7V8H4V7H5V5H2V7H3V8H0V7H1V2H0Z" fill="#000"/>
  <rect x="8" y="3" width="7" height="1" fill="#0000c0"/>
  <rect x="8" y="5" width="2" height="1" fill="#606060"/><rect x="11" y="5" width="3" height="1" fill="#606060"/>
  <rect x="9" y="7" width="5" height="1" fill="#606060"/>
  <rect x="2" y="9" width="1" height="1" fill="#404040"/><rect x="4" y="9" width="2" height="1" fill="#404040"/><rect x="8" y="10" width="1" height="1" fill="#404040"/><rect x="11" y="10" width="3" height="1" fill="#404040"/>
  <rect x="2" y="11" width="1" height="1" fill="#404040"/><rect x="4" y="11" width="2" height="1" fill="#404040"/>
  <rect x="2" y="13" width="1" height="1" fill="#404040"/><rect x="4" y="13" width="2" height="1" fill="#404040"/><rect x="8" y="13" width="6" height="1" fill="#404040"/>
</svg>
<svg class="a" style="left:703px;top:92px" width="16" height="15" viewBox="0 0 16 15" shape-rendering="crispEdges">
  <rect x="4" y="0" width="8" height="4" fill="#e4e4e4"/>
  <rect x="0" y="0" width="4" height="13" fill="#6a68a8"/><rect x="12" y="0" width="4" height="13" fill="#6a68a8"/><rect x="0" y="4" width="16" height="9" fill="#6a68a8"/>
  <rect x="1" y="1" width="2" height="3" fill="#fff"/><rect x="1" y="2" width="1" height="1" fill="#100030"/><rect x="13" y="1" width="2" height="3" fill="#fff"/><rect x="13" y="2" width="1" height="1" fill="#100030"/><rect x="1" y="5" width="2" height="3" fill="#fff"/><rect x="1" y="6" width="1" height="1" fill="#100030"/><rect x="4" y="5" width="2" height="3" fill="#fff"/><rect x="4" y="6" width="1" height="1" fill="#100030"/><rect x="7" y="5" width="2" height="3" fill="#fff"/><rect x="7" y="6" width="1" height="1" fill="#100030"/><rect x="10" y="5" width="2" height="3" fill="#fff"/><rect x="10" y="6" width="1" height="1" fill="#100030"/><rect x="13" y="5" width="2" height="3" fill="#fff"/><rect x="13" y="6" width="1" height="1" fill="#100030"/><rect x="1" y="9" width="2" height="3" fill="#fff"/><rect x="1" y="10" width="1" height="1" fill="#100030"/><rect x="4" y="9" width="2" height="3" fill="#fff"/><rect x="4" y="10" width="1" height="1" fill="#100030"/><rect x="7" y="9" width="2" height="3" fill="#fff"/><rect x="7" y="10" width="1" height="1" fill="#100030"/><rect x="10" y="9" width="2" height="3" fill="#fff"/><rect x="10" y="10" width="1" height="1" fill="#100030"/><rect x="13" y="9" width="2" height="3" fill="#fff"/><rect x="13" y="10" width="1" height="1" fill="#100030"/>
  <rect x="1" y="13" width="15" height="1" fill="#9c9ad0"/>
</svg>
<svg class="a" style="left:725px;top:93px" width="18" height="16" viewBox="0 0 18 16" shape-rendering="crispEdges">
  <rect x="9" y="0" width="7" height="6" fill="#a0a0a0"/><rect x="10" y="0" width="7" height="5" fill="#fff"/>
  <rect x="11" y="1" width="2" height="1" fill="#000"/><rect x="14" y="1" width="2" height="1" fill="#000"/><rect x="11" y="3" width="2" height="1" fill="#000"/><rect x="14" y="3" width="2" height="1" fill="#000"/>
  <rect x="0" y="6" width="18" height="9" fill="url(#dith)"/>
  <rect x="0" y="10" width="18" height="1" fill="#ff00ff"/>
  <path d="M0 8.5H3L4 12L5 8.5H8L9 7.5L10 8.5H18" fill="none" stroke="#0000ff" stroke-width="1.2" shape-rendering="auto"/>
</svg>
<svg class="a" style="left:749px;top:92px" width="16" height="16" viewBox="0 0 16 16" shape-rendering="crispEdges">
  <rect x="0" y="0" width="16" height="16" fill="#000"/>
  <rect x="1" y="1" width="14" height="14" fill="#f8f8f8"/>
  <rect x="1" y="1" width="1" height="1" fill="#000"/><rect x="14" y="1" width="1" height="1" fill="#000"/><rect x="1" y="14" width="1" height="1" fill="#000"/><rect x="14" y="14" width="1" height="1" fill="#000"/>
  <rect x="3" y="1" width="2" height="1" fill="#000"/><rect x="3" y="14" width="2" height="1" fill="#000"/><rect x="1" y="3" width="1" height="2" fill="#000"/><rect x="14" y="3" width="1" height="2" fill="#000"/><rect x="7" y="1" width="2" height="1" fill="#000"/><rect x="7" y="14" width="2" height="1" fill="#000"/><rect x="1" y="7" width="1" height="2" fill="#000"/><rect x="14" y="7" width="1" height="2" fill="#000"/><rect x="11" y="1" width="2" height="1" fill="#000"/><rect x="11" y="14" width="2" height="1" fill="#000"/><rect x="1" y="11" width="1" height="2" fill="#000"/><rect x="14" y="11" width="1" height="2" fill="#000"/>
  <path d="M1 10.5H2L3.5 11.5L8 5L12.5 11.5L14 10.5H15" fill="none" stroke="#ff2020" stroke-width="1.1" shape-rendering="auto"/>
</svg>
<div class="vsep" style="left:772px;top:91px;height:18px"></div>
<svg class="a" style="left:780px;top:92px" width="17" height="17" viewBox="0 0 17 17">
  <defs><linearGradient id="rbar" x1="0" x2="1"><stop offset="0" stop-color="#b01010"/><stop offset="0.5" stop-color="#e04040"/><stop offset="1" stop-color="#900000"/></linearGradient></defs>
  <rect x="6" y="0.5" width="4.5" height="15.5" rx="2.2" fill="url(#rbar)"/>
  <path d="M4 4C1 6 1 10 4 12" fill="none" stroke="#d04030" stroke-width="2"/>
  <path d="M12.5 4C15.5 6 15.5 10 12.5 12" fill="none" stroke="#d04030" stroke-width="2"/>
</svg>

<!-- MDI -->
<div class="a" style="left:1px;top:111px;width:943px;height:487px;border-top:1px solid #a0a0a0;border-left:1px solid #a0a0a0;border-right:1px solid #fff;border-bottom:1px solid #fff"></div>
<div class="a" style="left:2px;top:112px;width:941px;height:485px;border-top:1px solid #696969;border-left:1px solid #696969;border-right:1px solid #e3e3e3;border-bottom:1px solid #e3e3e3;background:#ffff80"></div>

<div class="a" style="left:3px;top:113px;width:861px;height:313px;background:#000;border-radius:5px 5px 0 0"></div>
<div class="a" style="left:4px;top:114px;width:859px;height:311px;background:#fff;border-radius:4px 4px 0 0"></div>
<div class="a" style="left:5px;top:115px;width:858px;height:310px;background:#6fe0f0;border-radius:3px 3px 0 0"></div>
<div class="a" style="left:5px;top:115px;width:857px;height:309px;background:linear-gradient(#98b3d1 0px,#a3bcd9 14px,#b9d1ea 28px,#b9d1ea 100%);border-radius:3px 3px 0 0"></div>
<div class="a" style="left:5px;top:143px;width:857px;height:1px;background:#c2d9f3"></div>
<svg class="a" style="left:13px;top:124px" width="15" height="15" viewBox="0 0 15 15" shape-rendering="crispEdges">
  <rect x="1" y="0" width="12" height="5" fill="#bdbdbd"/>
  <rect x="0" y="0" width="4" height="4" fill="#9ab4d2"/>
  <rect x="3" y="1" width="1" height="1" fill="#c8c8c8"/><rect x="2" y="2" width="2" height="2" fill="#c8c8c8"/><rect x="1" y="4" width="3" height="1" fill="#c8c8c8"/>
  <rect x="4" y="0" width="1" height="1" fill="#000"/><rect x="3" y="1" width="1" height="3" fill="#000"/><rect x="0" y="4" width="1" height="11" fill="#000"/><rect x="1" y="3" width="1" height="2" fill="#000" opacity="0"/>
  <rect x="13" y="0" width="2" height="15" fill="#000"/>
  <rect x="5" y="2" width="1" height="2" fill="#8000a0"/><rect x="6" y="2" width="2" height="2" fill="#0000ff"/><rect x="8" y="2" width="1" height="2" fill="#00b000"/><rect x="9" y="2" width="1" height="2" fill="#f0f000"/><rect x="10" y="2" width="2" height="2" fill="#d00000"/>
  <rect x="1" y="5" width="12" height="6" fill="#fff"/>
  <rect x="1" y="7" width="2" height="1" fill="#0000ff"/><rect x="7" y="7" width="6" height="1" fill="#0000ff"/><rect x="4" y="9" width="2" height="1" fill="#0000ff"/>
  <rect x="1" y="11" width="12" height="1" fill="#000"/>
  <rect x="1" y="12" width="12" height="3" fill="#c8c8c8"/>
</svg>
<div class="a" style="left:33px;top:126px;font-size:12.5px;letter-spacing:-0.45px;color:#000">2d_regulus.spc</div>
<div class="a btn" style="left:754px;top:123px"><div class="g-min"></div></div>
<div class="a btn" style="left:788px;top:123px"><div class="g-max"></div></div>
<div class="a btn cls" style="left:822px;top:123px"><svg class="a" style="left:9px;top:3px" width="13" height="11" viewBox="0 0 13 11"><path d="M2.5 1.8L9.5 8.2M9.5 1.8L2.5 8.2" stroke="#40302c" stroke-width="3.6" stroke-linecap="square"/><path d="M2.5 1.8L9.5 8.2M9.5 1.8L2.5 8.2" stroke="#fafafa" stroke-width="1.8" stroke-linecap="square"/></svg></div>
<div class="a" style="left:5px;top:144px;width:6px;height:91px;background:linear-gradient(rgba(255,255,255,0),rgba(255,255,255,0.42))"></div>
<div class="a" style="left:856px;top:144px;width:6px;height:91px;background:linear-gradient(rgba(255,255,255,0),rgba(255,255,255,0.42))"></div>
<div class="a" style="left:3px;top:118px;width:1px;height:26px;background:#3c3c44"></div>
<div class="a" style="left:863px;top:118px;width:1px;height:26px;background:#3c3c44"></div>
<!-- plot frame -->
<div class="a" style="left:11px;top:144px;width:821px;height:274px;background:#c4c000"></div>
<div class="a" style="left:14px;top:147px;width:814px;height:268px;background:#fff;border:1px solid #5a5a78"></div>
<svg class="a" style="left:0;top:0" width="954" height="626" viewBox="0 0 954 626">
  <line x1="824.5" y1="148" x2="824.5" y2="414" stroke="#e00000" stroke-width="1"/>
  <polyline fill="none" stroke="#0000ff" stroke-width="1" shape-rendering="crispEdges" points="17.5,413.6 25.1,412.3 30.1,411.5 36.8,408.9 43.5,406.9 46.9,404.2 53.6,399.7 58.6,394.7 63.7,388.8 68.7,379.6 72,375.4 75.4,366.2 78.4,357 82.1,353.9 85.1,348.6 87.1,328.4 91,323.4 95.5,331 98,320 99.7,310 100.6,298.3 102.7,285.4 104.9,276.8 107,276 109.2,282.5 111.4,295.4 113.2,301.2 115,294 116.4,276.8 117.8,266.7 120.1,243.7 124.6,227 127.8,220.7 132.3,216.2 134.8,218.1 137.4,230.9 139.3,256.5 141.2,266.7 142.5,259 145,234.7 147.6,213 150.1,200.2 153.3,196.4 156.5,199.6 160.4,205.3 163.6,205.3 170,196.4 173.8,197 177,204.1 178.9,212.4 180.2,224.5 181.5,241.1 183.4,250.1 185.9,243.7 188.5,222 190.4,214.9 193.6,212.4 198.9,213.2 201.1,212.5 204.7,215.3 210.4,216.8 214.8,218.2 220.5,218.2 224.1,215.3 228.4,217.5 232.7,222.5 237,221.8 242.1,215.3 247.1,211 250.7,217.5 257.2,227.6 260,236.2 262.9,241.9 265.1,227.6 268,206 270.1,204.6 273.6,211.8 277.2,214.3 280.8,211 283.7,201 286.5,195.2 290.1,192.3 293.7,198.8 297.3,204.3 303.1,200.3 305.9,193.1 310.3,186.6 313.1,186.6 319.6,191.3 323.2,190.2 327.5,184.4 332.5,179.4 335.4,179.4 339,183 342.6,184.4 344.8,183 349.1,178.7 353.4,176.5 356.3,177 359.9,178 363.4,180.4 367.8,178.7 370.6,176.5 374.2,173.7 377.8,172.7 381.4,175.1 385,177.5 387.9,178 392.2,175.1 396.5,173.2 400.8,174.4 404.3,177.9 408.6,180.1 411.5,180.1 415.1,177.2 419.4,177.7 423,181.5 425.6,188 427.3,203.8 429.5,218.2 431.3,229 433.8,215.3 435.9,193.8 438.8,185.1 441.7,182.5 446,184.4 451,187.3 454.6,184.4 458.9,182.5 462.5,182 466.8,186.6 469.7,188.3 471.9,190.2 475.5,187.7 479.8,188.7 483.4,191.6 489.1,199.2 494.2,199.2 497.8,197.3 502.1,198.4 506.4,203.8 512.9,207.4 516.4,205.3 520.8,203.5 525.1,206.7 530.1,210.7 532.9,211.5 536.5,210.1 540.8,210.5 545.1,214 548.7,216.3 553.7,216.3 556.6,215.4 560.9,215.8 565.2,221.2 570.3,225.5 573.1,223.8 578.2,223.5 581,225.9 584.6,227.3 588.9,233.1 594,233.1 598.3,231.7 602.6,230.9 606.9,234.5 612,237.4 616.3,236.7 622,236.7 627.8,241.7 632.1,244.6 637.8,241.3 643.6,244.6 650.8,251.4 656.5,253.2 660.8,253.7 665.8,258.2 670.8,259.4 673.7,263.4 676.5,263.7 685.2,271.2 694.5,273 701.7,276.3 710.3,283.1 716.8,285.5 721.8,288.1 728.3,290.3 734.8,290.7 738.4,291.3 743.4,295.3 752,298.5 759.2,300.3 766.2,307.9 774.8,312.2 781.3,314.4 789.2,319 795.6,319.4 801.4,321.3 807.1,322.3 814.3,324.4 817.2,326.2 824.4,327.3 826.5,328 826.5,350.3"/>
  <polyline fill="none" stroke="#800080" stroke-width="1" shape-rendering="crispEdges" points="15,250.6 18.6,247.7 22.2,246.6 23.7,245.1 25.1,246.9 27.5,242.3 30.1,244 32.3,243 33.7,244 35.6,242.3 37.3,251.2 40.2,247.7 41.9,248.3 43.8,249.2 45.9,240.1 48.1,239.1 50.3,240.1 51.7,240.1 53.8,234.3 56,228.4 58.2,218.3 60.3,216.2 62.5,207.5 64.6,225.5 67.5,192.4 69.2,222.6 73.3,184.5 76.4,220.5 80.2,175.2 81.9,175.9 85.5,221.2 89.1,176.6 91.7,172.3 94.8,175.2 97.3,225.5 101.3,177.3 105.6,188.1 109.2,186.7 112.1,193.9 115.2,230.5 118.2,190 119.3,183.8 123.6,189.6 127.1,197.7 129.1,211.1 132.3,193.8 137.4,194.5 139.3,216.8 140.6,246.2 141.8,253.9 143.1,224.5 144.6,202.8 147.6,202.1 152.1,207.9 155.9,209.8 159.7,217.5 162.3,211.1 166.1,209.2 170,212.4 176.3,220.7 178.9,221.3 181.5,232.2 184.4,260.3 186.6,238.6 188.5,226.4 193.9,231.9 196.8,230.4 199.7,229.7 203.3,231.2 209,234 215.5,233.3 219.8,236.9 224.8,237.6 226.3,240.8 229.1,238.6 233.4,238.6 239.2,246.5 242.1,244.3 247.8,245.8 251.4,243.6 253.6,244.3 256.4,242.2 258.6,243.6 260.8,272.4 262.2,281 264.4,256.6 267.9,245 272.3,247.9 275.8,253 277.5,259.4 279.3,253.7 281.8,251.1 284.4,254.4 286.5,257.7 288,264.5 290.8,268.4 293,267.8 295.9,261.6 298.8,260.6 302.3,261.3 304.2,267.3 307.4,264.5 311.7,258.3 314.6,260.6 318.6,258.7 321,262.6 323.9,261.6 326.8,263 329.7,266.3 334,263.8 338.3,263 341.9,266.9 346.9,269.5 349.8,267.8 354.8,267.8 359.1,269.8 363.4,269.2 369.2,269.2 373.5,266.3 377.1,270.7 380.7,269.5 384.3,274.1 387.9,274.1 394.4,273.5 399.4,277.4 403.6,278.7 406.5,278.3 408.6,279.2 410.8,278.3 414.4,281.6 417.3,280.9 420.1,279.4 424.2,278.3 426.6,283.8 429.5,287.3 430.5,296.7 431.6,302.4 433.1,293.8 435.2,288.8 438.8,288.1 440.5,285.9 443.1,288.1 446,284.5 448.9,286.6 452.5,294.1 455.3,285.5 457.5,285.5 460.4,287.3 466.1,288.4 470.4,289.2 473.3,288.4 476.9,288.8 479.8,293.1 482.2,298.1 485.5,295 490.6,293.8 493.4,296.4 499.2,294.5 503.5,294.5 507.8,297.8 512.1,297.4 515,299.3 519.3,299.3 522.2,298.1 526.5,301.3 531.5,302.7 533.6,301.3 537.2,300.4 540.8,301.6 543.7,304.4 547.3,304.4 549.4,305.6 553.7,306.6 558,308.5 560.9,307.3 564.5,310.5 568.1,309.5 571,310.5 573.1,309.5 577.4,309.5 581,312.3 584.6,313.1 587.5,314.5 597.6,314.5 601.9,318.1 604.8,316.7 607.6,318.5 613.4,317.4 617.7,320.5 620.6,319.5 624.2,322.4 627,319.1 630.6,321.4 633.5,321.7 636.4,323.4 640,321.7 643.6,325.7 645.7,323.4 650.8,326.3 655.8,325.7 658.7,327.2 662.9,325.5 667.2,327.7 678,329.1 683,328.4 687.3,331.3 695,332.3 702.2,332.3 705.1,334.2 709.4,334.8 711.5,334.2 715.1,334.2 718,336.7 720.9,335.2 724.5,335.7 728.1,338.1 731.7,344.6 733.8,339.5 738.1,338.5 749.6,338.5 753.9,341.4 756.8,339.1 759,339.5 761.8,347.4 764,346 766.6,356.1 769,349.6 771.2,341.4 775.5,342.4 779.8,345.3 784.1,345.7 789.2,344.6 794.9,348.6 799.2,346.7 808.6,345.7 812.9,347.4 824.4,347.4 826.5,349.6"/>
</svg>
<!-- side panel -->

<div class="a" style="left:832px;top:144px;width:24px;height:274px;background:#f0f0f0;border-left:1px solid #fff;border-top:1px solid #fff;border-right:1px solid #a0a0a0;border-bottom:1px solid #a0a0a0"></div>
<svg class="a" style="left:836px;top:148px" width="16" height="41" viewBox="0 0 16 41">
  <defs>
    <linearGradient id="arru" x1="0" y1="0" x2="1" y2="0"><stop offset="0" stop-color="#e8dc50"/><stop offset="0.4" stop-color="#f0e890"/><stop offset="0.55" stop-color="#c8b830"/><stop offset="0.8" stop-color="#484010"/><stop offset="1" stop-color="#303000"/></linearGradient>
    <linearGradient id="arrd" x1="0" y1="0" x2="1" y2="0"><stop offset="0" stop-color="#303000"/><stop offset="0.35" stop-color="#605818"/><stop offset="0.6" stop-color="#e0d040"/><stop offset="0.8" stop-color="#f0e890"/><stop offset="1" stop-color="#e8dc50"/></linearGradient>
  </defs>
  <rect x="0" y="0" width="15" height="17" fill="#ebe8d8"/>
  <rect x="0" y="23" width="15" height="18" fill="#ebe8d8"/>
  <path d="M7.3 0.3L14 16.9Q7.3 12 0.3 16.5Z" fill="url(#arru)"/>
  <path d="M1 23Q7.3 27.5 14.6 23L7.3 39.6Z" fill="url(#arrd)"/>
</svg>
<svg class="a" style="left:836px;top:194px" width="16" height="17" viewBox="0 0 16 17" shape-rendering="crispEdges">
  <rect width="16" height="17" fill="#ebe8d8"/>
  <path d="M4 6V4A3 3 0 0 1 10 4V5" fill="none" stroke="#000" stroke-width="1.6" shape-rendering="auto"/>
  <rect x="2" y="6" width="11" height="9" fill="#000"/>
  <rect x="3" y="7" width="9" height="7" fill="#ffff80"/>
  <rect x="7" y="9" width="2" height="3" fill="#000"/><rect x="6" y="10" width="4" height="1" fill="#000"/>
</svg>
<div class="a" style="left:835px;top:217px;width:18px;height:1px;background:#a0a0a0;box-shadow:0 1px 0 #fff"></div>
<svg class="a" style="left:836px;top:225px" width="16" height="17" viewBox="0 0 16 17" shape-rendering="crispEdges">
  <rect width="16" height="17" fill="#ebe8d8"/>
  <rect x="2" y="5" width="10" height="3" fill="#000"/><rect x="2" y="9" width="10" height="3" fill="#000"/>
  <rect x="2" y="8" width="10" height="1" fill="#f0f0a0"/><rect x="2" y="12" width="10" height="1" fill="#f0f0a0"/>
</svg>
<svg class="a" style="left:836px;top:248px" width="16" height="17" viewBox="0 0 16 17" shape-rendering="crispEdges">
  <rect x="2" y="0" width="14" height="14" fill="#e6e6e6"/>
  <rect x="1" y="1" width="1" height="16" fill="#300070"/><rect x="2" y="1" width="1" height="1" fill="#300070"/>
  <rect x="0" y="14" width="15" height="1" fill="#0000c0"/><rect x="14" y="13" width="1" height="2" fill="#0000c0"/>
  <g fill="#b000b0"><rect x="3" y="10" width="1" height="1"/><rect x="4" y="9" width="1" height="1"/><rect x="5" y="9" width="1" height="1"/><rect x="6" y="10" width="1" height="1"/><rect x="7" y="9" width="1" height="1"/><rect x="8" y="5" width="1" height="4"/><rect x="9" y="9" width="1" height="1"/><rect x="10" y="10" width="1" height="1"/><rect x="11" y="9" width="1" height="1"/><rect x="12" y="10" width="1" height="1"/><rect x="13" y="11" width="1" height="1"/></g>
  <g fill="#d00040"><rect x="11" y="0" width="4" height="1"/><rect x="10" y="1" width="2" height="3"/><rect x="11" y="4" width="4" height="1"/><rect x="13" y="1" width="2" height="1"/><rect x="13" y="3" width="2" height="1"/></g>
</svg>
<svg class="a" style="left:836px;top:271px" width="16" height="17" viewBox="0 0 16 17" shape-rendering="crispEdges">
  <rect width="16" height="17" fill="#ebe8d8"/>
  <rect x="1" y="2" width="14" height="13" fill="#000"/>
  <rect x="3" y="4" width="10" height="9" fill="#ffff70"/>
  <g fill="#ffff70"><rect x="3" y="3" width="1" height="1"/><rect x="5" y="3" width="1" height="1"/><rect x="7" y="3" width="1" height="1"/><rect x="9" y="3" width="1" height="1"/><rect x="11" y="3" width="1" height="1"/>
  <rect x="3" y="13" width="1" height="1"/><rect x="5" y="13" width="1" height="1"/><rect x="7" y="13" width="1" height="1"/><rect x="9" y="13" width="1" height="1"/><rect x="11" y="13" width="1" height="1"/>
  <rect x="2" y="5" width="1" height="1"/><rect x="2" y="7" width="1" height="1"/><rect x="2" y="9" width="1" height="1"/><rect x="2" y="11" width="1" height="1"/>
  <rect x="13" y="5" width="1" height="1"/><rect x="13" y="7" width="1" height="1"/><rect x="13" y="9" width="1" height="1"/><rect x="13" y="11" width="1" height="1"/></g>
</svg>
<svg class="a" style="left:836px;top:294px" width="16" height="16" viewBox="0 0 16 16" shape-rendering="crispEdges">
  <defs><pattern id="chk" width="2" height="2" patternUnits="userSpaceOnUse"><rect width="2" height="2" fill="#fff"/><rect width="1" height="1" fill="#606060"/><rect x="1" y="1" width="1" height="1" fill="#606060"/></pattern></defs>
  <rect width="16" height="16" fill="#ebe8d8"/>
  <rect x="1" y="2" width="14" height="13" fill="#fff"/>
  <polygon points="1,15 14,3 14,15" fill="url(#chk)"/>
  <polygon points="7,15 14,8 14,15" fill="#888"/>
  <rect x="1" y="14" width="13" height="1" fill="#000"/>
  <rect x="13" y="3" width="1" height="12" fill="#000"/><rect x="12" y="4" width="1" height="1" fill="#000"/>
</svg>
<svg class="a" style="left:836px;top:317px" width="16" height="17" viewBox="0 0 16 17">
  <rect width="16" height="17" fill="#e8e8e8"/>
  <path d="M3 3L13 13" stroke="#000" stroke-width="2"/>
</svg>
<div class="a" style="left:836px;top:340px;width:16px;height:17px;background:#e8e8e8"></div>
<div class="a" style="left:837px;top:340px;font-weight:bold;font-size:14px;line-height:16px;width:14px;text-align:center">A</div>
<svg class="a" style="left:836px;top:363px" width="16" height="17" viewBox="0 0 16 17">
  <defs><linearGradient id="camg" x1="0" y1="0" x2="0" y2="1"><stop offset="0" stop-color="#c8c8f0"/><stop offset="1" stop-color="#7070b0"/></linearGradient></defs>
  <rect width="16" height="17" fill="#e8e8e8"/>
  <rect x="0.5" y="4.5" width="15" height="10" rx="2" fill="url(#camg)" stroke="#8888c0" stroke-width="1"/>
  <rect x="2" y="2" width="4" height="3" fill="#b0b0e0"/>
  <circle cx="8.5" cy="9" r="4" fill="#fff"/><circle cx="8.5" cy="9" r="2.8" fill="#3090e0"/><circle cx="8" cy="8.5" r="1.2" fill="#c0e8ff"/>
  <rect x="11.5" y="3.5" width="4" height="3" fill="#d0f0ff"/>
</svg>
<div class="a" style="left:835px;top:386px;width:18px;height:1px;background:#a0a0a0;box-shadow:0 1px 0 #fff"></div>
<svg class="a" style="left:836px;top:393px" width="16" height="18" viewBox="0 0 16 18">
  <defs>
    <clipPath id="dome"><path d="M1 8A7 7 0 0 1 15 8V16H1Z"/></clipPath>
    <linearGradient id="rainb" x1="0" y1="0" x2="0" y2="1">
      <stop offset="0" stop-color="#ff1010"/><stop offset="0.12" stop-color="#ff6000"/><stop offset="0.25" stop-color="#f8f000"/>
      <stop offset="0.4" stop-color="#40d040"/><stop offset="0.55" stop-color="#00e0e0"/><stop offset="0.68" stop-color="#2040ff"/>
      <stop offset="0.8" stop-color="#000090"/><stop offset="0.9" stop-color="#8000c0"/><stop offset="1" stop-color="#c000c0"/>
    </linearGradient>
  </defs>
  <rect x="0" y="1" width="16" height="17" fill="#fff"/>
  <rect x="0" y="0" width="16" height="16" fill="url(#rainb)" clip-path="url(#dome)"/>
  <rect x="3" y="9" width="10" height="1" fill="#606060" opacity="0.5"/>
  <rect x="1" y="16" width="14" height="2" fill="#ffb0f0"/>
</svg>


<div class="a" style="left:1px;top:605px;width:952px;height:20px;border:1px solid #696969"></div>
<div class="a" style="left:2px;top:606px;width:950px;height:18px;border:1px solid #fff"></div>
<div class="a sunk" style="left:3px;top:607px;width:440px;height:16px"></div>
<div class="a" style="left:6px;top:610px;font-size:10px;letter-spacing:-0.2px;white-space:nowrap">C:\_Thomas\Astronomie\Astronomie_sonstiges\Spektroskopie\_reduction_VSpec\2D_regulus.spc</div>
</body></html>
